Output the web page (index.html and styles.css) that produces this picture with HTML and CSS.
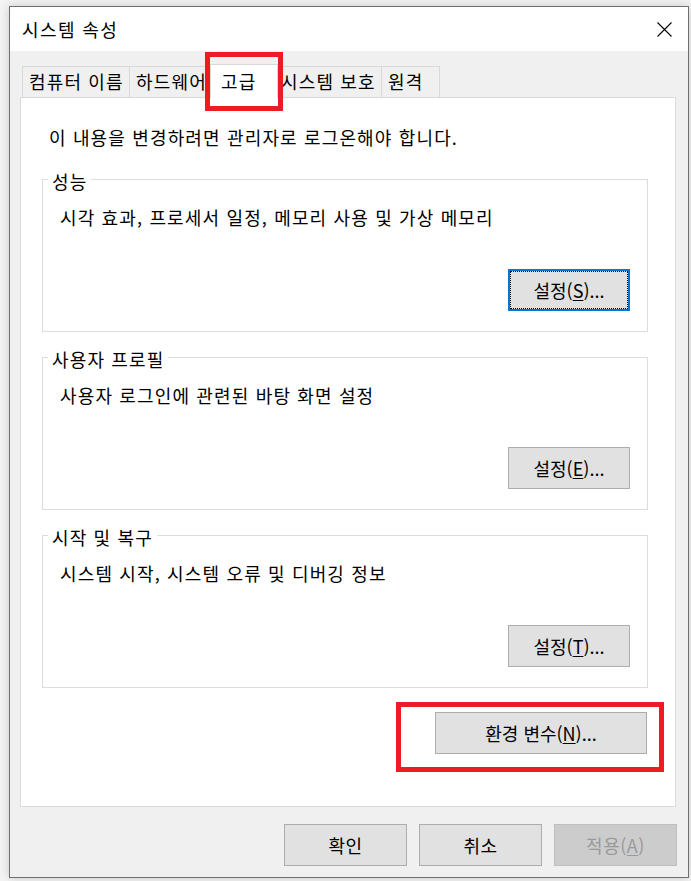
FILE: index.html
```html
<!DOCTYPE html>
<html lang="ko">
<head>
<meta charset="utf-8">
<title>시스템 속성</title>
<link rel="stylesheet" href="styles.css">
</head>
<body>
<div class="desktop">
  <div class="window">
    <div class="titlebar">
      <span class="title">시스템 속성</span>
      <svg class="close" width="15" height="15" viewBox="0 0 15 15"><path d="M0.5 0.5 L14.5 14.5 M14.5 0.5 L0.5 14.5" stroke="#000" stroke-width="1.1" fill="none"/></svg>
    </div>
    <div class="content">
      <div class="tabs">
        <div class="tab t1">컴퓨터 이름</div>
        <div class="tab t2">하드웨어</div>
        <div class="tab sel">고급</div>
        <div class="tab t4">시스템 보호</div>
        <div class="tab t5">원격</div>
      </div>
      <div class="panel">
        <p class="info">이 내용을 변경하려면 관리자로 로그온해야 합니다.</p>
        <div class="group">
          <span class="legend">성능</span>
          <p class="desc">시각 효과, 프로세서 일정, 메모리 사용 및 가상 메모리</p>
          <button class="btn focus">설정(<u>S</u>)...</button>
        </div>
        <div class="group">
          <span class="legend">사용자 프로필</span>
          <p class="desc">사용자 로그인에 관련된 바탕 화면 설정</p>
          <button class="btn">설정(<u>E</u>)...</button>
        </div>
        <div class="group">
          <span class="legend">시작 및 복구</span>
          <p class="desc">시스템 시작, 시스템 오류 및 디버깅 정보</p>
          <button class="btn">설정(<u>T</u>)...</button>
        </div>
        <div class="envrow">
          <button class="btn env">환경 변수(<u>N</u>)...</button>
        </div>
      </div>
      <div class="footer">
        <button class="btn foot">확인</button>
        <button class="btn foot">취소</button>
        <button class="btn foot disabled">적용(<u>A</u>)</button>
      </div>
    </div>
    <div class="mark mark-tab"></div>
    <div class="mark mark-env"></div>
  </div>
</div>
</body>
</html>
```
FILE: styles.css
```css
* { box-sizing: border-box; }
html, body { margin: 0; padding: 0; }
body {
  width: 691px;
  height: 881px;
  overflow: hidden;
  background: #f4f4f4;
  font-family: "Noto Sans CJK KR", "Noto Sans", sans-serif;
  font-size: 18px;
  letter-spacing: 1.15px;
  color: #000;
}
.desktop {
  padding: 6px 0 0 9px;
}
.window {
  position: relative;
  width: 680px;
  height: 872px;
  border: 1px solid #6f6f6f;
  background: #f0f0f0;
  box-shadow: 0 0 10px rgba(0,0,0,0.18);
}
.titlebar {
  height: 44px;
  background: #fff;
  display: flex;
  align-items: center;
  padding-left: 12px;
}
.title {
  line-height: 22px;
  font-size: 18px;
  letter-spacing: 1.4px;
}
.close {
  margin-left: auto;
  margin-right: 16px;
}
.content {
  padding-top: 15px;
}
.tabs {
  display: flex;
  align-items: flex-end;
  height: 31px;
  margin-left: 12px;
  position: relative;
  z-index: 2;
}
.tab {
  height: 31px;
  border: 1px solid #d9d9d9;
  border-bottom: none;
  background: #f0f0f0;
  line-height: 29px;
  padding-left: 6px;
  white-space: nowrap;
  overflow: hidden;
}
.t1 { width: 108px; }
.t2 { width: 84px; margin-left: -1px; }
.sel {
  width: 68px;
  margin-left: -3px;
  height: 34px;
  margin-bottom: -1px;
  background: #fff;
  padding-left: 10px;
  line-height: 32px;
  position: relative;
  z-index: 3;
}
.t4 { width: 106px; margin-left: -2px; padding-left: 4px; }
.t5 { width: 59px; margin-left: -1px; }
.panel {
  margin-left: 10px;
  width: 656px;
  height: 710px;
  border: 1px solid #d9d9d9;
  background: #fff;
  position: relative;
  z-index: 1;
  padding: 28px 0 0 0;
}
.info {
  margin: 0 0 0 28px;
  line-height: 22px;
}
.group {
  position: relative;
  margin: 31px 0 0 21px;
  width: 606px;
  height: 153px;
  border: 1px solid #dcdcdc;
  display: flex;
  flex-direction: column;
}
.group + .group { margin-top: 25px; }
.legend {
  position: absolute;
  left: 5px;
  top: -10px;
  padding: 0 4px;
  background: #fff;
  line-height: 22px;
}
.desc {
  margin: 26px 0 0 17px;
  line-height: 22px;
}
.btn {
  font-family: inherit;
  font-size: 18px;
  letter-spacing: 0;
  color: #000;
  background: #e1e1e1;
  border: 1px solid #adadad;
  border-radius: 0;
  padding: 0;
  line-height: 20px;
  cursor: default;
}
.btn u { text-underline-offset: 2px; }
.group .btn {
  width: 122px;
  height: 42px;
  margin: auto 17px 20px auto;
}
.btn.focus {
  border: 2px solid #0078d7;
  outline: 1px dotted #000;
  outline-offset: -3px;
}
.envrow {
  display: flex;
  justify-content: flex-end;
  margin: 24px 28px 0 0;
}
.btn.env {
  width: 212px;
  height: 42px;
}
.footer {
  display: flex;
  justify-content: flex-end;
  gap: 12px;
  margin-top: 17px;
  padding-right: 11px;
}
.btn.foot {
  width: 123px;
  height: 42px;
  letter-spacing: 0.5px;
}
.btn.disabled {
  background: #cccccc;
  border-color: #bfbfbf;
  color: #9a9a9a;
}
.mark {
  position: absolute;
  border: 5px solid #ed1c24;
  z-index: 5;
}
.mark-tab {
  left: 195px;
  top: 45px;
  width: 78px;
  height: 59px;
}
.mark-env {
  left: 386px;
  top: 695px;
  width: 268px;
  height: 70px;
}
```
